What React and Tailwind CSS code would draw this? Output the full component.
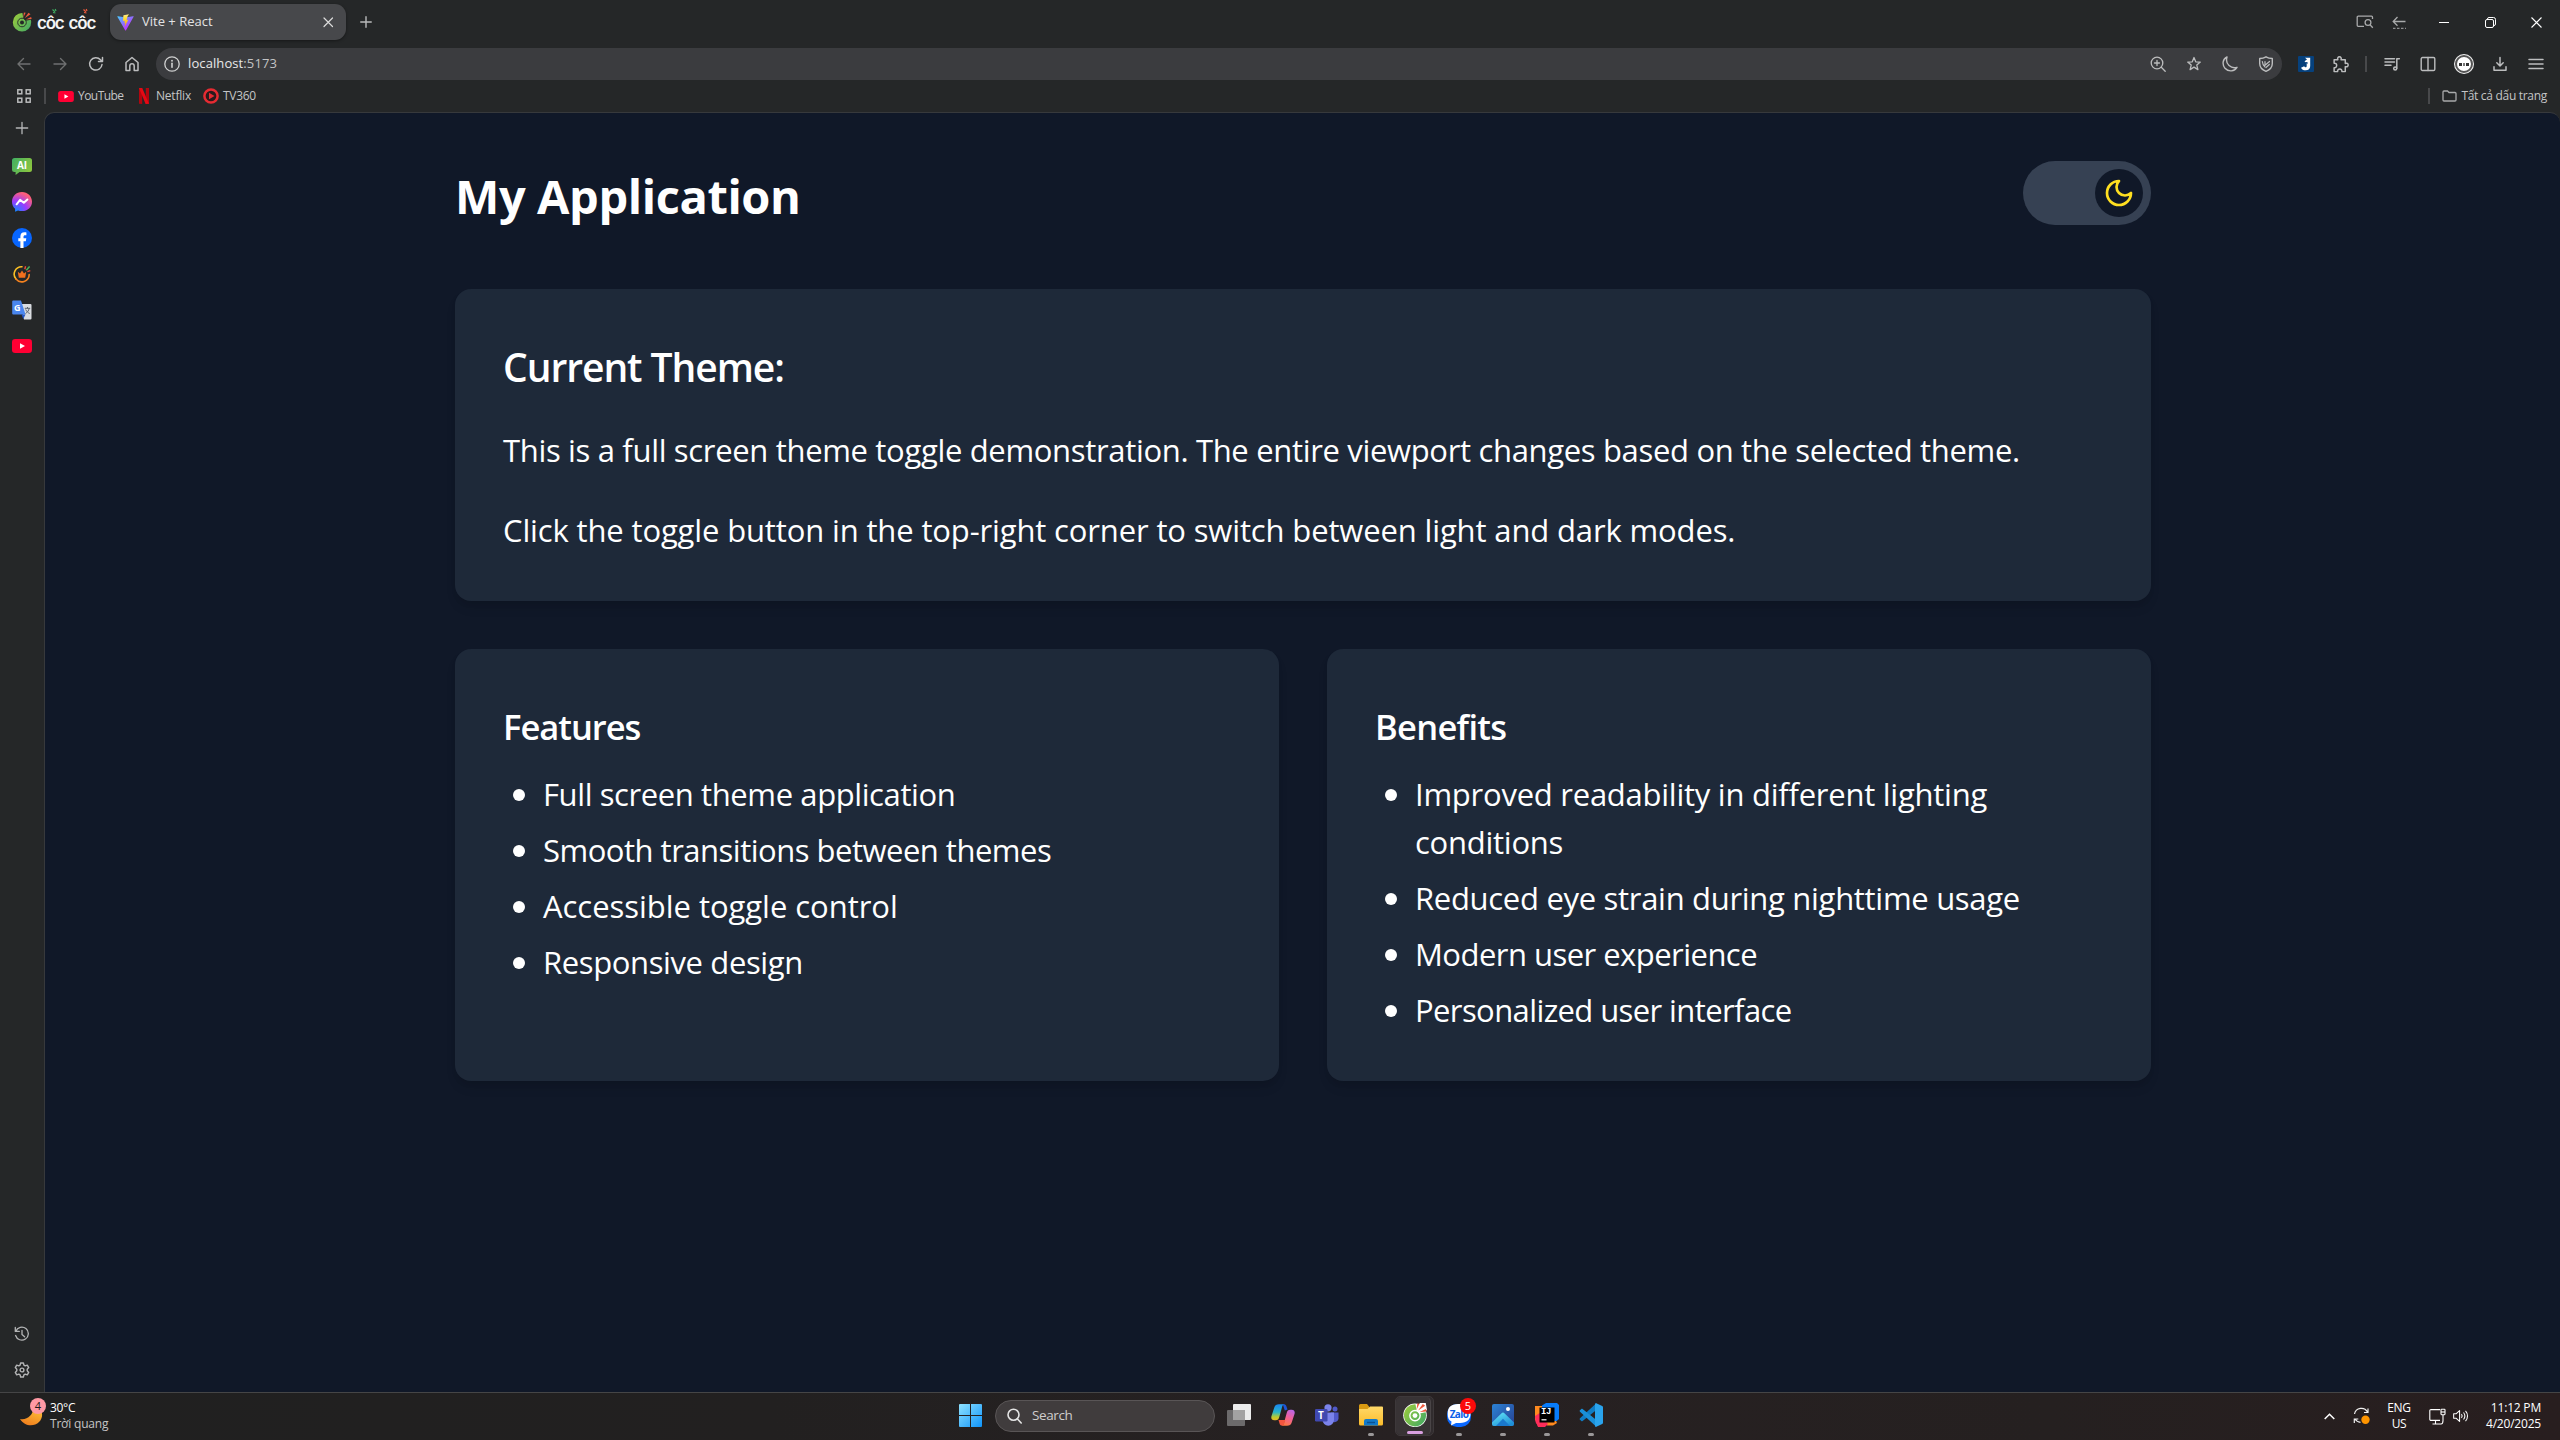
import React from 'react';

/* ---------- shared helpers ---------- */

function Line({ size = 16, sw = 1.25, className = '', children }) {
  return (
    <svg
      width={size}
      height={size}
      viewBox="0 0 16 16"
      fill="none"
      stroke="currentColor"
      strokeWidth={sw}
      strokeLinecap="round"
      strokeLinejoin="round"
      className={className}
    >
      {children}
    </svg>
  );
}

function Slot({ className = 'w-9', children }) {
  return <div className={`flex shrink-0 items-center justify-center ${className}`}>{children}</div>;
}

/* ---------- logos ---------- */

function CocCocMark({ size = 20, outlined = false }) {
  return (
    <svg width={size} height={size} viewBox="0 0 20 20" fill="none">
      <defs>
        <linearGradient id="ccGreen" x1="0" y1="4" x2="20" y2="18" gradientUnits="userSpaceOnUse">
          <stop stopColor="#9ccc3c" />
          <stop offset="1" stopColor="#3fa866" />
        </linearGradient>
      </defs>
      {outlined && <circle cx="10" cy="10.3" r="9.8" fill="#fff" />}
      {outlined && <path d="M10 8 14 0l5 0 1 6Z" fill="#fff" />}
      <path
        d="M10.400 1.100A9.200 9.200 0 1 0 19.200 10l-.3-2.200-5.100 1-2.400-2.200Z"
        fill="url(#ccGreen)"
      />
      <circle cx="10" cy="10.500" r="4.300" stroke={outlined ? '#fff' : '#252728'} strokeWidth={outlined ? 1.200 : 0.900} />
      <circle cx="10" cy="10.500" r="2" fill={outlined ? '#fff' : '#252728'} />
      <path d="m11.300 5.600.6-5.200 1.800.3Z" fill="#ef5a3c" />
      <path d="m12.600 6.200 3.900-5.400 2 1.500Z" fill="#ef5a3c" />
      <path d="m13.900 7.500 5.200-2.400.5 1.900Z" fill="#ef5a3c" />
    </svg>
  );
}

function ViteMark() {
  return (
    <svg width="17" height="17" viewBox="0 0 32 32">
      <defs>
        <linearGradient id="viteA" x1="0" y1="3" x2="19" y2="28" gradientUnits="userSpaceOnUse">
          <stop stopColor="#41d1ff" />
          <stop offset="1" stopColor="#bd34fe" />
        </linearGradient>
        <linearGradient id="viteB" x1="15" y1="2" x2="19" y2="22" gradientUnits="userSpaceOnUse">
          <stop stopColor="#ffea83" />
          <stop offset=".3" stopColor="#ffdd35" />
          <stop offset="1" stopColor="#ffa800" />
        </linearGradient>
      </defs>
      <path d="M31 5.500 17 30.500a1 1 0 0 1-1.700 0L1 5.500a1 1 0 0 1 1-1.500l14 2.500 14-2.500a1 1 0 0 1 1 1.500Z" fill="url(#viteA)" />
      <path d="M22.500.5 12.500 2.500l-.5.5-.6 10.300 3.400-.7-.9 4.500 2-.6-1.700 8 7-13.500-3.200.6 1.800-7Z" fill="url(#viteB)" />
    </svg>
  );
}

function YouTubeMark({ className = 'h-[11px] w-4' }) {
  return (
    <svg viewBox="0 0 20 14" className={className}>
      <rect width="20" height="14" rx="3.2" fill="#ff0033" />
      <path d="M8 4.200v5.600L13 7Z" fill="#fff" />
    </svg>
  );
}

function NetflixMark() {
  return (
    <svg width="10" height="16" viewBox="0 0 10 16">
      <path d="M0 0h3.200v16L0 15.700ZM6.800 0H10v15.700l-3.200.3Z" fill="#b1060f" />
      <path d="M0 0h3.200L10 15.700 6.600 16Z" fill="#e50914" />
    </svg>
  );
}

function Tv360Mark() {
  return (
    <svg width="16" height="16" viewBox="0 0 16 16">
      <circle cx="8" cy="8" r="6.600" fill="#2a1a1c" stroke="#e62b32" strokeWidth="2.500" />
      <path d="M6 4.700v6.600L11.500 8Z" fill="#e62b32" />
    </svg>
  );
}

function MessengerMark() {
  return (
    <svg width="20" height="20" viewBox="0 0 20 20">
      <defs>
        <radialGradient id="msg" cx="4" cy="20" r="20" gradientUnits="userSpaceOnUse">
          <stop stopColor="#0a8cff" />
          <stop offset=".55" stopColor="#9b3bff" />
          <stop offset="1" stopColor="#ff5f7a" />
        </radialGradient>
      </defs>
      <path d="M10 0C4.300 0 0 4.200 0 9.700c0 2.900 1.200 5.400 3.100 7.100v3l2.900-1.300c1.200.4 2.600.6 4 .6 5.700 0 10-4 10-9.400S15.700 0 10 0Z" fill="url(#msg)" />
      <path d="m4.600 12.300 3.500-4.400 3.700 2.800 3.600-3.200" fill="none" stroke="#fff" strokeWidth="2" strokeLinejoin="round" strokeLinecap="round" />
    </svg>
  );
}

function FacebookMark() {
  return (
    <svg width="20" height="20" viewBox="0 0 20 20">
      <circle cx="10" cy="10" r="10" fill="#0866ff" />
      <path d="M8.400 19.900v-6.700H6.300v-3h2.100V8.600c0-2.900 1.300-4.300 4.200-4.300.7 0 1.500.1 1.800.2v2.700h-1.200c-1.200 0-1.700.5-1.700 1.700v1.300h2.800l-.5 3h-2.300v6.700Z" fill="#fff" />
    </svg>
  );
}

function CrownRing() {
  return (
    <svg width="18" height="18" viewBox="0 0 18 18" fill="none">
      <path d="M9 1.800A7.400 7.400 0 0 0 3 14" stroke="#fbbf24" strokeWidth="1.600" strokeLinecap="round" />
      <path d="M16.200 9.500A7.400 7.400 0 0 1 3 14" stroke="#f5821f" strokeWidth="1.600" strokeLinecap="round" />
      <path d="m4.800 6.800 2.200 1.600L9 5.600l2 2.800 2.200-1.600-1 5.900H5.800Z" fill="#f2701e" />
      <path d="m11.800 4.200.8-3" stroke="#ef4a36" strokeWidth="1.400" />
      <path d="m13.300 5.200 3.300-3.700" stroke="#49b35a" strokeWidth="1.500" />
      <path d="m14.400 6.600 2.900-.9" stroke="#ef4a36" strokeWidth="1.300" />
    </svg>
  );
}

function TranslateMark() {
  return (
    <div className="relative h-5 w-5 font-bold">
      <svg width="20" height="20" viewBox="0 0 20 20" className="absolute inset-0">
        <path d="M8 4h10.500a1 1 0 0 1 1 1v13.500a1 1 0 0 1-1 1H12Z" fill="#d9dce0" />
        <path d="M1.200.500H9l4.500 14H1.200a1 1 0 0 1-1-1v-12a1 1 0 0 1 1-1Z" fill="#4a86ee" />
        <path d="M9.500 14.500h4l-2.200 4.500Z" fill="#2456c4" />
        <path d="M12.800 8.300h5.400M15.500 7v1.300m1.700 0c-.4 2.400-2 4.200-3.700 5.200m.2-4c.9 1.800 2.300 3.300 4 4" stroke="#5b636d" strokeWidth="1" fill="none" />
      </svg>
      <span className="absolute left-[2px] top-[2px] text-[9px] leading-[11px] text-white">G</span>
    </div>
  );
}

function AiBubble() {
  return (
    <div className="relative h-[17px] w-5">
      <svg width="20" height="17" viewBox="0 0 20 17" className="absolute inset-0">
        <defs>
          <linearGradient id="ai" x1="0" y1="0" x2="20" y2="10" gradientUnits="userSpaceOnUse">
            <stop stopColor="#3fae62" />
            <stop offset="1" stopColor="#8cc63f" />
          </linearGradient>
        </defs>
        <path d="M2.500 0h15A2.500 2.500 0 0 1 20 2.500v9a2.500 2.500 0 0 1-2.500 2.500H7.500L3.600 17v-3H2.500A2.500 2.500 0 0 1 0 11.500v-9A2.500 2.500 0 0 1 2.500 0Z" fill="url(#ai)" />
      </svg>
      <span className="absolute inset-x-0 top-[1px] text-center text-[10px] font-bold leading-[12px] text-white">AI</span>
    </div>
  );
}

/* ---------- browser chrome ---------- */

function TitleBar() {
  return (
    <div className="flex h-11 items-center">
      <div className="flex w-[110px] items-center pl-3">
        <CocCocMark size={20} />
        <div className="relative ml-[5px] flex gap-[5px] pt-[2px] font-['Inter',sans-serif] text-[17px] font-semibold leading-5 tracking-[-1.2px] text-[#f4f4f4]">
          <span>côc</span>
          <span>côc</span>
          <svg width="60" height="8" viewBox="0 0 60 8" className="absolute left-0 top-[-3px]">
            <path d="m15.500 1.500 2.400 2.200M18.200 1l.8 2M16 4.500l2.500.5" stroke="#3fae62" strokeWidth="1.200" />
            <path d="m46.500 1.500 2.400 2.200M49.200 1l.8 2M47 4.500l2.500.5" stroke="#ef5a3c" strokeWidth="1.200" />
          </svg>
        </div>
      </div>
      <div className="flex h-9 w-[236px] items-center rounded-[11px] bg-[#47484b] pl-[7px] pr-[10px] shadow-[0_1px_3px_rgba(0,0,0,0.4)]">
        <ViteMark />
        <span className="ml-2 flex-1 text-[13px] text-[#e3e3e3]">Vite + React</span>
        <Line size={16} sw={1.200} className="text-[#dcdcdc]">
          <path d="m4 4 8.500 8.500M12.500 4 4 12.500" />
        </Line>
      </div>
      <Slot className="w-10 text-[#b9babb]">
        <Line sw={1.600} size={14}>
          <path d="M8 2v12M2 8h12" />
        </Line>
      </Slot>
      <div className="flex-1" />
      <Slot className="w-[34px] text-[#a9aaab]">
        <svg width="18" height="14" viewBox="0 0 18 14" fill="none" stroke="currentColor" strokeWidth="1.300">
          <path d="M8 11.300H2.200a1 1 0 0 1-1-1V2.200a1 1 0 0 1 1-1h13.300a1 1 0 0 1 1 1V4" />
          <circle cx="12" cy="7.500" r="2.900" />
          <path d="m14 9.800 2.800 3" />
        </svg>
      </Slot>
      <Slot className="w-[34px] text-[#a9aaab]">
        <svg width="14" height="13" viewBox="0 0 14 13" fill="none" stroke="currentColor" strokeWidth="1.300">
          <path d="M13.500 5.500H1.500M5.500 1 1.200 5.500l4.300 4.300" />
          <path d="M1 12.300h13" strokeDasharray="2.500 1.500" strokeWidth="1" />
        </svg>
      </Slot>
      <div className="ml-[5px] mr-px flex text-white">
        <Slot className="w-[46px]">
          <div className="h-px w-[10px] bg-white" />
        </Slot>
        <Slot className="w-[46px]">
          <svg width="11" height="11" viewBox="0 0 11 11" fill="none" stroke="currentColor">
            <rect x=".5" y="2.500" width="8" height="8" rx="1.500" />
            <path d="M2.500 2.300V2A1.500 1.500 0 0 1 4 .5h4.500a2 2 0 0 1 2 2V7A1.500 1.500 0 0 1 9 8.500" />
          </svg>
        </Slot>
        <Slot className="w-[46px]">
          <svg width="11" height="11" viewBox="0 0 11 11" fill="none" stroke="currentColor" strokeWidth="1.100">
            <path d="m.5.500 10 10M10.500.500l-10 10" />
          </svg>
        </Slot>
      </div>
    </div>
  );
}

function Toolbar() {
  return (
    <div className="flex h-10 items-center px-1.5 text-[#bcbdbe]">
      <Slot className="w-9 text-[#6f7071]">
        <Line size={16} sw={1.400}>
          <path d="M14 8H2M7.500 2.500 2 8l5.500 5.500" />
        </Line>
      </Slot>
      <Slot className="w-9 text-[#6f7071]">
        <Line size={16} sw={1.400}>
          <path d="M2 8h12M8.500 2.500 14 8l-5.500 5.500" />
        </Line>
      </Slot>
      <Slot>
        <Line size={16} sw={1.500}>
          <path d="M14 8.500A6.200 6.200 0 1 1 12.500 3.800l1.800 1.700M14.500 1.500v4h-4" />
        </Line>
      </Slot>
      <Slot>
        <Line size={16} sw={1.500}>
          <path d="M2 6.500 8 1.500l6 5v8h-3.800V10a2.200 2.200 0 0 0-4.400 0v4.500H2Z" />
        </Line>
      </Slot>
      <div className="ml-1.5 flex h-8 flex-1 items-center rounded-full bg-[#3b3c3f] pl-2">
        <Line size={16} sw={1.300} className="text-[#cfd0d0]">
          <circle cx="8" cy="8" r="7.200" />
          <path d="M8 7.300v4" strokeWidth="1.600" />
          <path d="M8 4.600v.2" strokeWidth="1.800" />
        </Line>
        <div className="ml-2 flex-1 text-[13px] tracking-[0.1px] text-[#c3c4c5]">
          <span className="text-[#e8e8e8]">localhost</span>:5173
        </div>
        <Slot>
          <Line size={16} sw={1.300}>
            <circle cx="7" cy="7" r="5.800" />
            <path d="m11.300 11.300 3.900 3.900M7 4.500v5M4.500 7h5" />
          </Line>
        </Slot>
        <Slot>
          <Line size={16} sw={1.300}>
            <path d="m8 1.500 1.700 4.300 4.600.3-3.500 3 1.100 4.500L8 11.100l-3.900 2.500 1.100-4.500-3.500-3 4.600-.3Z" />
          </Line>
        </Slot>
        <Slot>
          <Line size={16} sw={1.400}>
            <path d="M5 1C.5 3 0 8.500 3 12.200c3.500 4 9.500 3.400 12-.9C9.500 13.300 2.700 8 5 1Z" />
          </Line>
        </Slot>
        <Slot className="mr-[-2px] w-9">
          <Line size={16} sw={1.400}>
            <path d="M8 .8c2 1.300 4 1.700 6.300 1.700V7.500c0 4-2.500 6.300-6.300 7.800C4.200 13.800 1.700 11.500 1.700 7.500v-5C4 2.500 6 2.100 8 .8Z" />
            <path d="M4.300 5.500c.3 2.500 1 4 2.500 5.300M7 5.500v3.800L11.500 5.500M11.300 8.500 8 11.500" strokeWidth="1.200" />
          </Line>
        </Slot>
      </div>
      <Slot className="ml-1.5 w-9">
        <svg width="16" height="16" viewBox="0 0 16 16">
          <rect width="16" height="16" rx="1" fill="#06417d" />
          <path d="M7 1.800h5.200v8.200c0 2.800-1.700 4.300-4.500 4.300-2.400 0-4-1-4.700-2.600l3.200-1.400c.3.600.7 1 1.300 1 .8 0 1.200-.5 1.200-1.500V7.200L6.500 5.300 9 3.500Z" fill="#fff" />
          <path d="M7 6.200 9.500 8.300V6Z" fill="#06417d" />
        </svg>
      </Slot>
      <Slot className="w-[34px] pr-0.5">
        <Line size={17} sw={1.400}>
          <path d="M2 3.500h3.500c-.6-1.700.2-2.700 1.500-2.700s2.100 1 1.500 2.700H12.500V7c1.700-.6 2.700.2 2.700 1.500S14.200 10.600 12.500 10v4.700H9.300c.3-1.500-.7-2.400-2-2.400s-2.300.9-2 2.400H2V11c1.500.3 2.400-.8 2.400-2.200S3.500 6.500 2 6.800Z" />
        </Line>
      </Slot>
      <Slot className="w-4">
        <div className="h-4 w-[2px] bg-[#48494b]" />
      </Slot>
      <Slot>
        <Line size={16} sw={1.500}>
          <path d="M1 2.700h9.500M1 6h9.500M1 9.300h6M12.800 12.300V2.700H15.300" />
          <circle cx="11.200" cy="12.400" r="1.500" />
        </Line>
      </Slot>
      <Slot>
        <Line size={16} sw={1.400}>
          <rect x="1.200" y="1.500" width="13.600" height="13" rx="1.300" />
          <path d="M8 1.500v13" />
        </Line>
      </Slot>
      <Slot>
        <div className="flex h-5 w-5 items-center justify-center rounded-full bg-[#f1f1f1]">
          <div className="flex h-[18px] w-[18px] items-center justify-center rounded-full border-2 border-[#555] bg-white">
            <div className="flex h-[3px] w-[10px] gap-px">
              <div className="flex-1 bg-[#333]" />
              <div className="flex-1 bg-[#777]" />
              <div className="flex-1 bg-[#333]" />
            </div>
          </div>
        </div>
      </Slot>
      <Slot>
        <Line size={16} sw={1.500}>
          <path d="M8 1.500v8.300M4.800 6.800 8 10l3.200-3.200M2 10.800v3.400h12v-3.400" />
        </Line>
      </Slot>
      <Slot>
        <Line size={16} sw={1.500}>
          <path d="M1 3.500h14M1 8h14M1 12.500h14" />
        </Line>
      </Slot>
    </div>
  );
}

function BookmarksBar() {
  return (
    <div className="flex h-7 items-center pb-1 pl-1.5 pr-[13px] text-[12px] text-[#c4c5c6]">
      <Slot>
        <svg width="14" height="14" viewBox="0 0 14 14" fill="none" stroke="#b9babb" strokeWidth="1.500">
          <rect x=".8" y=".8" width="4" height="4" />
          <rect x="9.200" y=".8" width="4" height="4" />
          <rect x=".8" y="9.200" width="4" height="4" />
          <rect x="9.200" y="9.200" width="4" height="4" />
        </svg>
      </Slot>
      <div className="ml-[2px] h-4 w-[2px] bg-[#48494b]" />
      <div className="ml-3 flex w-[81px] items-center gap-1">
        <YouTubeMark />
        <span className="tracking-[-0.55px]">YouTube</span>
      </div>
      <div className="flex w-16 items-center gap-[7px]">
        <NetflixMark />
        <span className="tracking-[-0.2px]">Netflix</span>
      </div>
      <div className="flex items-center gap-1">
        <Tv360Mark />
        <span className="tracking-[-0.3px]">TV360</span>
      </div>
      <div className="flex-1" />
      <div className="h-4 w-[2px] bg-[#48494b]" />
      <svg width="15" height="12" viewBox="0 0 15 12" fill="none" stroke="#a9aaab" strokeWidth="1.300" className="ml-3">
        <path d="M1 2a1 1 0 0 1 1-1h3.500l1.500 1.500h6a1 1 0 0 1 1 1V10a1 1 0 0 1-1 1H2a1 1 0 0 1-1-1Z" />
      </svg>
      <span className="ml-1 tracking-[-0.3px]">Tất cả dấu trang</span>
    </div>
  );
}

function SideBar() {
  return (
    <div className="flex w-11 flex-col pb-1 text-[#b4b5b6]">
      <Slot className="h-8">
        <Line sw={1.500} size={14}>
          <path d="M8 1.500v13M1.500 8h13" />
        </Line>
      </Slot>
      <Slot className="mt-[3px] h-[37px] pt-px">
        <AiBubble />
      </Slot>
      <Slot className="h-9">
        <MessengerMark />
      </Slot>
      <Slot className="h-9">
        <FacebookMark />
      </Slot>
      <Slot className="h-9">
        <CrownRing />
      </Slot>
      <Slot className="h-9">
        <TranslateMark />
      </Slot>
      <Slot className="h-9">
        <YouTubeMark className="h-[14px] w-5" />
      </Slot>
      <div className="flex-1" />
      <Slot className="h-9">
        <Line size={16} sw={1.300}>
          <path d="M1.800 5.200A6.500 6.500 0 1 1 1.600 9.500M1.300 1.500v3.900h4M8 4.300v4.200l2.600 2.300" />
        </Line>
      </Slot>
      <Slot className="h-9">
        <Line size={16} sw={1.400}>
          <path d="M6.600 1h2.800l.5 2.100 1.300.8 2.100-.7 1.400 2.400L13.200 7.200v1.600l1.500 1.600-1.400 2.400-2.100-.7-1.300.8L9.400 15H6.600l-.5-2.100-1.300-.8-2.100.7-1.400-2.400 1.500-1.600V7.200L1.300 5.600l1.400-2.400 2.100.7 1.300-.8Z" />
          <circle cx="8" cy="8" r="1.900" />
        </Line>
      </Slot>
    </div>
  );
}

/* ---------- web page ---------- */

const features = [
  { text: 'Full screen theme application', tracking: 'tracking-[-0.4px]' },
  { text: 'Smooth transitions between themes', tracking: 'tracking-[-0.5px]' },
  { text: 'Accessible toggle control', tracking: 'tracking-[-0.04px]' },
  { text: 'Responsive design', tracking: 'tracking-[-0.38px]' },
];

const benefits = [
  { text: 'Improved readability in different lighting conditions', tracking: 'tracking-[-0.25px]' },
  { text: 'Reduced eye strain during nighttime usage', tracking: 'tracking-[-0.3px]' },
  { text: 'Modern user experience', tracking: 'tracking-[-0.53px]' },
  { text: 'Personalized user interface', tracking: 'tracking-[-0.6px]' },
];

function Card({ className = '', children }) {
  return (
    <section
      className={`rounded-2xl bg-gray-800 px-12 pb-[47px] pt-[49px] shadow-[0_8px_12px_-2px_rgba(0,0,0,0.1),0_4px_8px_-4px_rgba(0,0,0,0.1)] ${className}`}
    >
      {children}
    </section>
  );
}

function BulletCard({ title, titleTracking, items }) {
  return (
    <Card className="flex-1">
      <h3 className={`mb-[15px] pt-px text-[34.5px] font-semibold leading-[56px] ${titleTracking}`}>{title}</h3>
      <ul className="flex flex-col gap-2 text-[31px] leading-[48px]">
        {items.map((item) => (
          <li key={item.text} className="flex items-start">
            <span className="ml-[10px] mr-[18px] mt-[19px] h-3 w-3 shrink-0 rounded-full bg-white" />
            <span className={item.tracking}>{item.text}</span>
          </li>
        ))}
      </ul>
    </Card>
  );
}

function ThemeToggle() {
  return (
    <button className="flex h-16 w-32 items-center justify-end rounded-full bg-gray-700 pr-2">
      <span className="flex h-12 w-12 items-center justify-center rounded-full bg-gray-900">
        <svg width="32" height="32" viewBox="0 0 24 24" fill="none" stroke="currentColor" strokeWidth="2" strokeLinecap="round" strokeLinejoin="round" className="text-yellow-300">
          <path d="M12 3a6 6 0 0 0 9 9 9 9 0 1 1-9-9Z" />
        </svg>
      </span>
    </button>
  );
}

function Page() {
  return (
    <main className="flex-1 overflow-hidden rounded-t-[10px] border-l border-t border-[#37393c] bg-gray-900 text-white">
      <div className="ml-[362px] w-[1792px] p-12">
        <header className="mb-16 flex h-16 items-start justify-between">
          <h1 className="pt-[3px] text-[47px] font-bold leading-[64px] tracking-[-0.4px]">My Application</h1>
          <ThemeToggle />
        </header>
        <Card className="mb-12">
          <h2 className="mb-[31px] pt-px text-[39px] font-semibold leading-[56px] tracking-[-1.05px]">Current Theme:</h2>
          <p className="mb-8 whitespace-nowrap text-[31px] leading-[48px] tracking-[-0.33px]">
            This is a full screen theme toggle demonstration. The entire viewport changes based on the selected theme.
          </p>
          <p className="text-[31px] leading-[48px] tracking-[-0.14px]">
            Click the toggle button in the top-right corner to switch between light and dark modes.
          </p>
        </Card>
        <div className="flex gap-12">
          <BulletCard title="Features" titleTracking="tracking-[-1px]" items={features} />
          <BulletCard title="Benefits" titleTracking="tracking-[-0.7px]" items={benefits} />
        </div>
      </div>
    </main>
  );
}

/* ---------- taskbar ---------- */

function WindowsMark() {
  return (
    <svg width="23" height="23" viewBox="0 0 23 23">
      <defs>
        <linearGradient id="win" x1="0" y1="0" x2="23" y2="23" gradientUnits="userSpaceOnUse">
          <stop stopColor="#8fe2ff" />
          <stop offset="1" stopColor="#0f94fb" />
        </linearGradient>
      </defs>
      <path d="M0 1a1 1 0 0 1 1-1h10v11H0ZM12 0h10a1 1 0 0 1 1 1v10H12ZM0 12h11v11H1a1 1 0 0 1-1-1ZM12 12h11v10a1 1 0 0 1-1 1H12Z" fill="url(#win)" />
    </svg>
  );
}

function TaskViewMark() {
  return (
    <svg width="24" height="22" viewBox="0 0 24 22">
      <rect x="6" y="0" width="18" height="16" rx="1" fill="#ececec" />
      <rect x="0" y="6" width="18" height="16" rx="1" fill="#6c6a6b" />
      <rect x="6" y="6" width="12" height="10" fill="#a3a2a2" />
    </svg>
  );
}

function CopilotMark() {
  return (
    <svg width="24" height="24" viewBox="0 0 24 24">
      <defs>
        <linearGradient id="copA" x1="4" y1="2" x2="4" y2="18" gradientUnits="userSpaceOnUse">
          <stop stopColor="#1b8af0" />
          <stop offset=".45" stopColor="#28b5c8" />
          <stop offset=".75" stopColor="#b9cc30" />
          <stop offset="1" stopColor="#f5b51e" />
        </linearGradient>
        <linearGradient id="copB" x1="20" y1="5" x2="12" y2="22" gradientUnits="userSpaceOnUse">
          <stop stopColor="#b067f5" />
          <stop offset=".5" stopColor="#f0609a" />
          <stop offset="1" stopColor="#ff7a3c" />
        </linearGradient>
      </defs>
      <path d="M16.500 6.500 15.300 3c-.4-1.200-1.300-1.700-2.500-1.700h-1l2 6.200Z" fill="#1d55d8" />
      <path d="M8 1.300h5.200c-1 .2-1.600 1-2 2.200L8.300 14c-.6 2.200-1.500 3.200-3.600 3.200H3.300C.8 17.200-.2 15.400.5 13L3.300 4.500C4 2.300 5.500 1.300 8 1.300Z" fill="url(#copA)" />
      <path d="M16 22.700h-5.200c1-.2 1.600-1 2-2.200L15.700 10c.6-2.200 1.500-3.200 3.600-3.200h1.400c2.500 0 3.500 1.800 2.800 4.200l-2.800 8.500c-.7 2.200-2.200 3.200-4.700 3.200Z" fill="url(#copB)" />
      <path d="m7.500 17 1.200 4c.4 1.200 1.300 1.700 2.500 1.700h.5c.8-.3 1.200-1 1.600-2.200l1-3.500Z" fill="#f4563f" />
    </svg>
  );
}

function TeamsMark() {
  return (
    <div className="relative h-[22px] w-6">
      <svg width="24" height="22" viewBox="0 0 24 22" className="absolute inset-0">
        <circle cx="20" cy="5" r="2.500" fill="#5059c9" />
        <path d="M16 8.500h7.500v6a4 4 0 0 1-7.500 1.500Z" fill="#5059c9" />
        <circle cx="13" cy="3.800" r="3.600" fill="#7b83eb" />
        <path d="M7.500 8.500H19V16a5.700 5.700 0 0 1-11.500 0Z" fill="#7b83eb" />
        <rect x="0" y="5" width="12.500" height="12.500" rx="1.200" fill="#4048b0" />
      </svg>
      <span className="absolute left-0 top-[5px] w-[12px] text-center text-[10px] font-bold leading-[12px] text-white">T</span>
    </div>
  );
}

function ExplorerMark() {
  return (
    <svg width="24" height="22" viewBox="0 0 24 22">
      <defs>
        <linearGradient id="fol" x1="0" y1="3" x2="0" y2="21" gradientUnits="userSpaceOnUse">
          <stop stopColor="#ffd867" />
          <stop offset="1" stopColor="#fbbd2c" />
        </linearGradient>
      </defs>
      <path d="M0 1.500A1.500 1.500 0 0 1 1.500 0H8l2 2.500V6H0Z" fill="#d99a12" />
      <path d="M0 5h8.500L11 2.500h12a1 1 0 0 1 1 1V20a1.500 1.500 0 0 1-1.500 1.500h-21A1.500 1.500 0 0 1 0 20Z" fill="url(#fol)" />
      <path d="M5 21.500V17a2 2 0 0 1 2-2h10a2 2 0 0 1 2 2v4.500Z" fill="#1279c9" />
      <path d="M8 18.500h8" stroke="#0a5090" strokeWidth="1.400" />
    </svg>
  );
}

function ZaloMark() {
  return (
    <div className="relative h-6 w-6">
      <svg width="24" height="24" viewBox="0 0 24 24" className="absolute inset-0">
        <rect y="1" width="24" height="23" rx="10" fill="#0a68ff" />
        <path d="M11 1h2c7 0 10.500 3.500 10.500 9.500S20 20 13 20H9l-5 2.500.5-4C1.500 17 .7 14.500.7 10.500.7 4.500 4 1 11 1Z" fill="#fff" />
      </svg>
      <span className="absolute left-0 top-[5px] w-6 text-center text-[10px] font-bold leading-[12px] tracking-[-0.6px] text-[#0a5fe8]">Zalo</span>
      <span className="absolute left-[13px] top-[-5px] flex h-4 w-4 items-center justify-center rounded-full bg-[#fb0a0a] text-[11px] leading-4 text-white">5</span>
    </div>
  );
}

function PhotosMark() {
  return (
    <svg width="22" height="22" viewBox="0 0 22 22">
      <defs>
        <linearGradient id="ph" x1="0" y1="0" x2="20" y2="18" gradientUnits="userSpaceOnUse">
          <stop stopColor="#2b83d6" />
          <stop offset="1" stopColor="#28499a" />
        </linearGradient>
        <linearGradient id="ph2" x1="8" y1="8" x2="14" y2="22" gradientUnits="userSpaceOnUse">
          <stop stopColor="#5ee0f5" />
          <stop offset="1" stopColor="#1f8fd8" />
        </linearGradient>
      </defs>
      <rect width="22" height="22" rx="2" fill="url(#ph)" />
      <circle cx="16" cy="5" r="2" fill="#fff" />
      <path d="M0 18.500 9.600 9.200a2 2 0 0 1 2.800 0L22 18.500V20a2 2 0 0 1-2 2H2a2 2 0 0 1-2-2Z" fill="url(#ph2)" />
      <path d="m4 22 7-7.200 7 7.200Z" fill="#1a78cc" />
    </svg>
  );
}

function IntelliJMark() {
  return (
    <div className="relative h-6 w-6">
      <svg width="24" height="24" viewBox="0 0 24 24" className="absolute inset-0">
        <path d="M0 3h8v18H4.500L0 17Z" fill="#ff8a1f" />
        <path d="M0 13 8 8v14l-5 1-2.500-4Z" fill="#ff2d5a" />
        <path d="M7 2.500 11 0h11l2 2v14l-6 5H8Z" fill="#087cfa" />
        <path d="M10 18h11l1 2-4 2.500h-6Z" fill="#ff8a1f" />
        <path d="m1 19 8-3 4 5-3 3H3Z" fill="#ff2d5a" />
        <rect x="4.500" y="4.500" width="15" height="15" fill="#000" />
        <path d="M6.500 16.800h5" stroke="#fff" strokeWidth="1.200" />
      </svg>
      <span className="absolute left-[6px] top-[5px] font-['Liberation_Mono',monospace] text-[9px] font-bold leading-[9px] tracking-[-0.5px] text-white">IJ</span>
    </div>
  );
}

function VsCodeMark() {
  return (
    <svg width="24" height="24" viewBox="0 0 24 24">
      <path d="M17.300.3 1 15.300c-.5.500-.5 1.100 0 1.500l1.300 1.200c.4.300.9.300 1.300 0L18 6.500Z" fill="#0f7cc4" />
      <path d="M17.300 23.700 1 8.700c-.5-.500-.5-1.100 0-1.500L2.300 6c.4-.3.900-.3 1.300 0L18 17.500Z" fill="#1a8fd8" />
      <path d="M17.300.3 23.200 3c.5.2.8.7.8 1.200v15.600c0 .5-.3 1-.8 1.200l-5.900 2.700c-.6.300-1.300.1-1.300-.7V1c0-.8.700-1 1.300-.7Z" fill="#2aa3ec" />
    </svg>
  );
}

function TaskApp({ running = false, children }) {
  return (
    <div className="relative flex h-12 w-11 items-center justify-center pb-[3px]">
      {children}
      {running && <div className="absolute bottom-[5px] left-[19px] h-[3px] w-1.5 rounded-full bg-[#9a9798]" />}
    </div>
  );
}

function Taskbar() {
  return (
    <footer className="flex h-12 items-center border-t border-[#454546] bg-[linear-gradient(90deg,#202020_0%,#222020_30%,#272122_55%,#252020_80%,#281e1f_100%)] text-[12px] text-white">
      <div className="flex w-[948px] items-center pb-px">
        <div className="relative ml-5 h-7 w-[30px]">
          <svg width="24" height="26" viewBox="0 0 24 26" className="absolute left-0 top-0">
            <defs>
              <linearGradient id="moon" x1="16" y1="4" x2="8" y2="25" gradientUnits="userSpaceOnUse">
                <stop stopColor="#ffc63a" />
                <stop offset="1" stopColor="#ee7a1c" />
              </linearGradient>
            </defs>
            <path d="M13 2c9 2 12 12 6 18-5 5-14.500 4.500-19-3C8 18.500 15 12 13 2Z" fill="url(#moon)" />
          </svg>
          <span className="absolute left-[10px] top-[-4px] flex h-4 w-4 items-center justify-center rounded-full bg-[#ff99a4] text-[11px] leading-4 text-[#1b1b1b]">4</span>
        </div>
        <div className="leading-4">
          <div className="tracking-[-0.3px]">30°C</div>
          <div className="tracking-[-0.2px] text-[#c5c5c5]">Trời quang</div>
        </div>
      </div>
      <div className="flex items-center">
        <TaskApp>
          <WindowsMark />
        </TaskApp>
        <div className="mb-[2px] ml-[3px] mr-[2px] flex h-8 w-[220px] items-center rounded-full border border-[#595556] bg-[#403c3d] pl-[11px]">
          <svg width="15" height="16" viewBox="0 0 15 16" fill="none" stroke="#e4e4e4" strokeWidth="1.600">
            <circle cx="6.500" cy="6.800" r="5.500" />
            <path d="m10.500 11 3.700 4" strokeLinecap="round" />
          </svg>
          <span className="ml-[10px] text-[13.500px] tracking-[-0.4px] text-[#cfcdcd]">Search</span>
        </div>
        <div className="flex pr-0.5">
          <TaskApp>
            <TaskViewMark />
          </TaskApp>
          <TaskApp>
            <CopilotMark />
          </TaskApp>
          <TaskApp>
            <TeamsMark />
          </TaskApp>
          <TaskApp running>
            <ExplorerMark />
          </TaskApp>
          <div className="flex h-12 w-11 items-center pb-px">
            <div className="ml-[2px] h-10 w-[39px] rounded-[5px] border border-[#3d383a] bg-[#312c2e]">
              <div className="flex h-[38px] w-[35px] flex-col items-center rounded-[5px] border-r border-[#4a4547] bg-[#383335] pl-[3px] pt-[6px]">
                <CocCocMark size={24} outlined />
                <div className="mt-[4px] h-[3px] w-4 shrink-0 rounded-full bg-[#d8a0e0]" />
              </div>
            </div>
          </div>
          <TaskApp running>
            <ZaloMark />
          </TaskApp>
          <TaskApp running>
            <PhotosMark />
          </TaskApp>
          <TaskApp running>
            <IntelliJMark />
          </TaskApp>
          <TaskApp running>
            <VsCodeMark />
          </TaskApp>
        </div>
      </div>
      <div className="flex flex-1 items-center justify-end pb-px pr-[19px]">
        <Slot className="w-8">
          <svg width="11" height="7" viewBox="0 0 11 7" fill="none" stroke="#fff" strokeWidth="1.500">
            <path d="m.7 6 4.800-4.800L10.300 6" />
          </svg>
        </Slot>
        <Slot className="w-8">
          <svg width="17" height="18" viewBox="0 0 17 18" fill="none" stroke="#f0f0f0" strokeWidth="1.200">
            <path d="M1.500 7A7 7 0 0 1 14.500 5M15 1.500v4h-4M7.500 15.300A7 7 0 0 1 2 12M1.300 16v-4h4" />
            <circle cx="12.500" cy="12.800" r="4.200" fill="#ff9500" stroke="none" />
          </svg>
        </Slot>
        <div className="w-11 text-center leading-4 tracking-[-0.3px]">
          <div>ENG</div>
          <div>US</div>
        </div>
        <Slot className="w-8">
          <svg width="17" height="17" viewBox="0 0 17 17" fill="none" stroke="#fff" strokeWidth="1.100">
            <path d="M11 1.600H2A1.200 1.200 0 0 0 .8 2.800v8.400A1.200 1.200 0 0 0 2 12.400h9M6.500 12.400V16M3.500 16h9M14 7v5.500M14 12.500c0 2-1 3.500-2 3.500" />
            <rect x="12" y="1.300" width="4" height="5.400" rx=".6" />
            <path d="M12 4h4" />
          </svg>
        </Slot>
        <Slot className="w-4">
          <svg width="17" height="14" viewBox="0 0 17 14" fill="none" stroke="#fff" strokeWidth="1.100" strokeLinejoin="round">
            <path d="M.7 4.700h2.500L7 1.200v11.600L3.200 9.300H.7Z" />
            <path d="M9 5c.9 1.200.9 2.800 0 4M11.200 3.300c1.700 2.200 1.700 5.200 0 7.400M13.300 1.500c2.800 3.200 2.800 7.800 0 11" />
          </svg>
        </Slot>
        <div className="w-[72px] text-right leading-4 tracking-[-0.2px]">
          <div>11:12 PM</div>
          <div>4/20/2025</div>
        </div>
      </div>
    </footer>
  );
}

export default function App() {
  return (
    <div className="flex h-[1440px] w-[2560px] flex-col overflow-hidden bg-[#252728] font-['Open_Sans','Noto_Sans',sans-serif]">
      <TitleBar />
      <Toolbar />
      <BookmarksBar />
      <div className="flex min-h-0 flex-1">
        <SideBar />
        <Page />
      </div>
      <Taskbar />
    </div>
  );
}
